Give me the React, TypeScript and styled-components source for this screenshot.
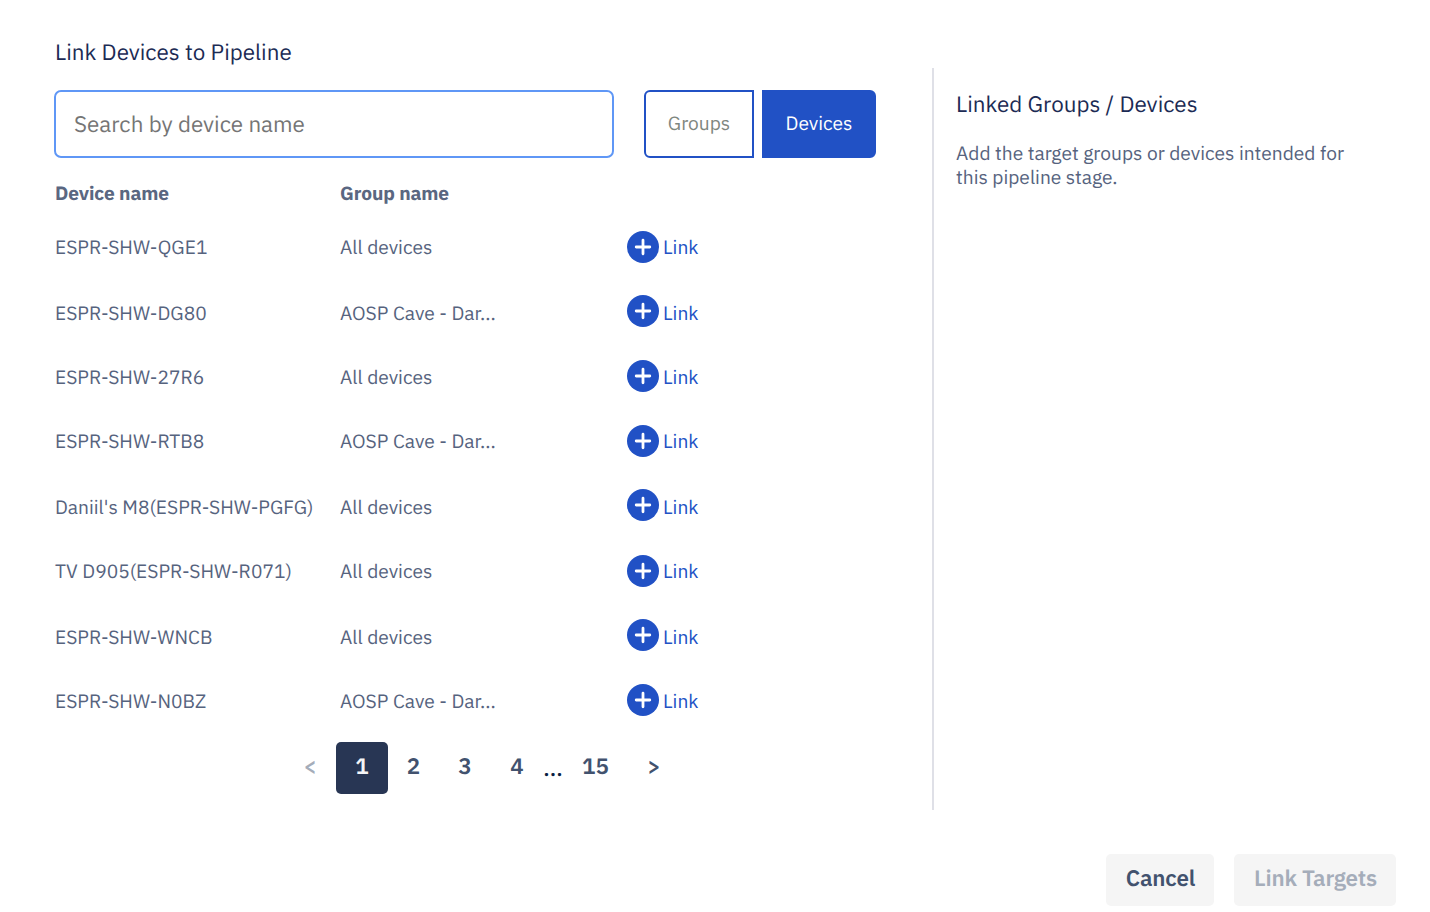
import React from "react";
import styled, { createGlobalStyle } from "styled-components";

const GlobalStyle = createGlobalStyle`
  *, *::before, *::after { box-sizing: border-box; }
  body {
    margin: 0;
    background: #fff;
    font-family: "IBM Plex Sans", Roboto, "Liberation Sans", sans-serif;
    -webkit-font-smoothing: antialiased;
    text-rendering: geometricPrecision;
  }
  button, input { font-family: inherit; text-rendering: inherit; }
`;

const Dialog = styled.div`
  width: 1430px;
  height: 912px;
  overflow: hidden;
  display: flex;
  flex-direction: column;
  background: #fff;
`;

const Content = styled.div`
  display: flex;
  height: 810px;
`;

const Picker = styled.section`
  width: 932px;
  padding: 37px 56px 0 54px;
`;

const Title = styled.h2`
  margin: 0;
  font-size: 22.4px;
  font-weight: 400;
  line-height: 32px;
  color: #1c2b54;
  white-space: nowrap;
`;

const PickerTitle = styled(Title)`
  padding-left: 1px;
`;

const Toolbar = styled.div`
  display: flex;
  margin-top: 21px;
  height: 68px;
`;

const SearchInput = styled.input`
  width: 560px;
  height: 68px;
  margin-right: 30px;
  padding: 0 18px;
  border: 2px solid #5f97f6;
  border-radius: 7px;
  outline: none;
  font-size: 22.4px;
  color: #1c2b54;
  &::placeholder { color: #757575; opacity: 1; }
`;

const Toggle = styled.div`
  display: flex;
  gap: 8px;
`;

const ToggleButton = styled.button<{ $active?: boolean }>`
  width: ${(p) => (p.$active ? 114 : 110)}px;
  height: 68px;
  padding: 0 0 2px;
  border: 2px solid #2151c5;
  border-radius: ${(p) => (p.$active ? "0 6px 6px 0" : "6px 0 0 6px")};
  background: ${(p) => (p.$active ? "#2151c5" : "#fff")};
  color: ${(p) => (p.$active ? "#fff" : "#7f8780")};
  font-size: 19.2px;
`;

const HeaderRow = styled.div`
  display: grid;
  grid-template-columns: 285px 287px auto;
  margin-top: 22px;
  height: 54px;
  padding-left: 1px;
  font-size: 19.2px;
  font-weight: 700;
  line-height: 28px;
  letter-spacing: -0.12px;
  color: #5a6781;
`;

const DeviceRow = styled.div<{ $pitch: number }>`
  display: grid;
  grid-template-columns: 285px 287px auto;
  align-items: start;
  height: ${(p) => p.$pitch}px;
  padding-left: 1px;
  font-size: 19.2px;
  line-height: 28px;
  color: #56637e;
  white-space: nowrap;
`;

const LinkButton = styled.button`
  display: flex;
  align-items: flex-start;
  gap: 4px;
  padding: 0;
  border: 0;
  background: none;
  color: #2151c5;
  font-size: 19.2px;
  line-height: 28px;
`;

const PlusIcon = styled.svg<{ $lift: number }>`
  display: block;
  width: 32px;
  height: 32px;
  margin-top: ${(p) => -3 - p.$lift}px;
`;

const Pagination = styled.nav`
  display: flex;
  height: 52px;
  margin-top: -1px;
  margin-left: 230px;
`;

const PageButton = styled.button<{ $width: number; $active?: boolean; $muted?: boolean }>`
  width: ${(p) => p.$width}px;
  height: 52px;
  padding: 0 0 4px;
  border: 0;
  border-radius: 5px;
  background: ${(p) => (p.$active ? "#283654" : "transparent")};
  color: ${(p) => (p.$active ? "#f4f5f7" : p.$muted ? "#a5adba" : "#42526e")};
  font-size: 22.4px;
  font-weight: 600;
`;

const Ellipsis = styled.span`
  width: 20px;
  padding-top: 13px;
  text-align: center;
  font-size: 22.4px;
  font-weight: 500;
  line-height: 28px;
  color: #091e42;
`;

const LinkedPanel = styled.aside`
  width: 498px;
  margin-top: 68px;
  padding: 21px 60px 0 22px;
  border-left: 2px solid #dfe0e7;
`;

const Hint = styled.p`
  width: 400px;
  margin: 21px 0 0;
  font-size: 19.2px;
  line-height: 24px;
  color: #56637e;
`;

const Footer = styled.footer`
  display: flex;
  justify-content: flex-end;
  gap: 20px;
  padding: 44px 34px 0 0;
`;

const FooterButton = styled.button<{ $width: number; $muted?: boolean }>`
  width: ${(p) => p.$width}px;
  height: 52px;
  padding: 0 0 4px 1px;
  border: 0;
  border-radius: 5px;
  background: #f5f5f5;
  color: ${(p) => (p.$muted ? "#a5adba" : "#42526e")};
  font-size: 22.4px;
  font-weight: 600;
  letter-spacing: -0.2px;
`;

type Device = { name: string; group: string; pitch: number; lift: number };

const ALL = "All devices";
const CAVE = "AOSP Cave - Dar...";

const devices: Device[] = [
  { name: "ESPR-SHW-QGE1", group: ALL, pitch: 66, lift: 0 },
  { name: "ESPR-SHW-DG80", group: CAVE, pitch: 64, lift: 2 },
  { name: "ESPR-SHW-27R6", group: ALL, pitch: 64, lift: 1 },
  { name: "ESPR-SHW-RTB8", group: CAVE, pitch: 66, lift: 0 },
  { name: "Daniil's M8(ESPR-SHW-PGFG)", group: ALL, pitch: 64, lift: 2 },
  { name: "TV D905(ESPR-SHW-R071)", group: ALL, pitch: 66, lift: 0 },
  { name: "ESPR-SHW-WNCB", group: ALL, pitch: 64, lift: 2 },
  { name: "ESPR-SHW-N0BZ", group: CAVE, pitch: 55, lift: 1 },
];

export default function App() {
  return (
    <>
      <GlobalStyle />
      <Dialog>
        <Content>
          <Picker>
            <PickerTitle>Link Devices to Pipeline</PickerTitle>
            <Toolbar>
              <SearchInput placeholder="Search by device name" />
              <Toggle>
                <ToggleButton>Groups</ToggleButton>
                <ToggleButton $active>Devices</ToggleButton>
              </Toggle>
            </Toolbar>
            <HeaderRow>
              <span>Device name</span>
              <span>Group name</span>
            </HeaderRow>
            {devices.map((d) => (
              <DeviceRow key={d.name} $pitch={d.pitch}>
                <span>{d.name}</span>
                <span>{d.group}</span>
                <LinkButton>
                  <PlusIcon $lift={d.lift} viewBox="0 0 32 32">
                    <circle cx="16" cy="16" r="16" fill="#2151c5" />
                    <path d="M16 9.2v13.6M9.2 16h13.6" stroke="#fff" strokeWidth="2.8" strokeLinecap="round" />
                  </PlusIcon>
                  Link
                </LinkButton>
              </DeviceRow>
            ))}
            <Pagination>
              <PageButton $width={52} $muted>&lt;</PageButton>
              <PageButton $width={52} $active>1</PageButton>
              <PageButton $width={51}>2</PageButton>
              <PageButton $width={52}>3</PageButton>
              <PageButton $width={52}>4</PageButton>
              <Ellipsis>...</Ellipsis>
              <PageButton $width={65}>15</PageButton>
              <PageButton $width={52}>&gt;</PageButton>
            </Pagination>
          </Picker>
          <LinkedPanel>
            <Title as="h3">Linked Groups / Devices</Title>
            <Hint>Add the target groups or devices intended for this pipeline stage.</Hint>
          </LinkedPanel>
        </Content>
        <Footer>
          <FooterButton $width={108}>Cancel</FooterButton>
          <FooterButton $width={162} $muted>Link Targets</FooterButton>
        </Footer>
      </Dialog>
    </>
  );
}
